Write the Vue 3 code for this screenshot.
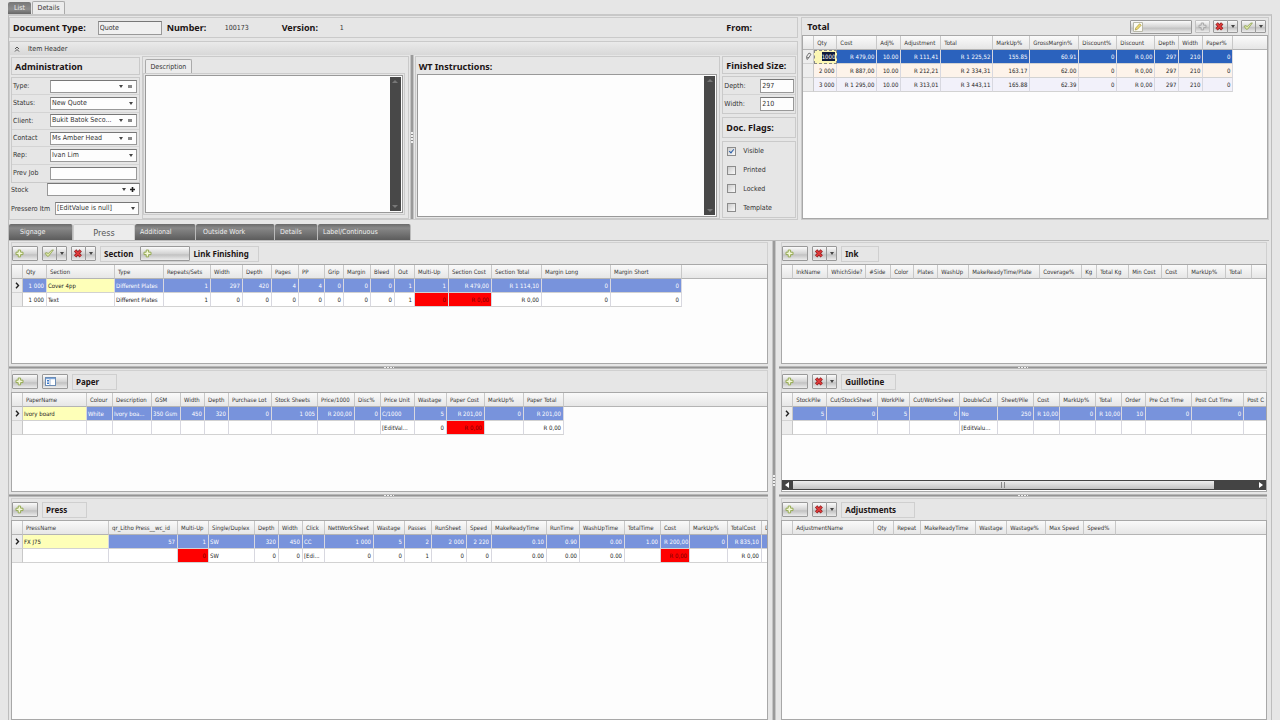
<script setup>
import { ref } from 'vue'

const col = (spec) =>
  spec.split(';').map((s) => {
    const [name, width, align] = s.split('|')
    return { name, width: Number(width), align: align || 'r' }
  })

const total = {
  cols: col('Qty|23;Cost|40;Adj%|24;Adjustment|40;Total|52;MarkUp%|37;GrossMargin%|49;Discount%|38;Discount|38;Depth|24;Width|24;Paper%|30'),
  rows: [
    ['1000', 'R 479,00', '10.00', 'R 111,41', 'R 1 225,52', '155.85', '60.91', '0', 'R 0,00', '297', '210', '0'],
    ['2 000', 'R 887,00', '10.00', 'R 212,21', 'R 2 334,31', '163.17', '62.00', '0', 'R 0,00', '297', '210', '0'],
    ['3 000', 'R 1 295,00', '10.00', 'R 313,01', 'R 3 443,11', '165.88', '62.39', '0', 'R 0,00', '297', '210', '0']
  ]
}

const leftPanels = [
  {
    title: 'Section', tools: ['add', 'check', 'delete'], link: true, size: 'short',
    cols: col('Qty|24;Section|68|l;Type|49|l;Repeats/Sets|47;Width|32;Depth|29;Pages|27;PP|26;Grip|19;Margin|27;Bleed|24;Out|20;Multi-Up|34;Section Cost|43;Section Total|50;Margin Long|69;Margin Short|71'),
    yellow: 1, red: [12, 13],
    rows: [
      ['1 000', 'Cover 4pp', 'Different Plates', '1', '297', '420', '4', '4', '0', '0', '0', '1', '1', 'R 479,00', 'R 1 114,10', '0', '0'],
      ['1 000', 'Text', 'Different Plates', '1', '0', '0', '0', '0', '0', '0', '0', '1', '0', 'R 0,00', 'R 0,00', '0', '0']
    ]
  },
  {
    title: 'Paper', tools: ['add', 'form'], size: 'mid',
    cols: col('PaperName|64|l;Colour|26|l;Description|39|l;GSM|29|l;Width|24;Depth|24;Purchase Lot|43;Stock Sheets|46;Price/1000|37;Disc%|26;Price Unit|34|l;Wastage|32;Paper Cost|38;MarkUp%|39;Paper Total|40'),
    yellow: 0, red: [12],
    rows: [
      ['Ivory board', 'White', 'Ivory boa...', '350 Gsm', '450', '320', '0', '1 005', 'R 200,00', '0', 'C/1000', '5', 'R 201,00', '0', 'R 201,00'],
      ['', '', '', '', '', '', '', '', '', '', '[EditVal...', '0', 'R 0,00', '', 'R 0,00']
    ]
  },
  {
    title: 'Press', tools: ['add'], size: 'mid',
    cols: col('PressName|86|l;qr_Litho Press__wc_id|69;Multi-Up|31;Single/Duplex|46|l;Depth|24;Width|24;Click|22|l;NettWorkSheet|49;Wastage|31;Passes|27;RunSheet|35;Speed|25;MakeReadyTime|55;RunTime|33;WashUpTime|45;TotalTime|36;Cost|29;MarkUp%|38;TotalCost|34;D|40'),
    yellow: 0, red: [2, 16],
    rows: [
      ['FX J75', '57', '1', 'SW', '320', '450', 'CC', '1 000', '5', '2', '2 000', '2 220', '0.10', '0.90', '0.00', '1.00', 'R 200,00', '0', 'R 835,10', ''],
      ['', '', '0', 'SW', '0', '0', '[Edi...', '0', '0', '1', '0', '0', '0.00', '0.00', '0.00', '', 'R 0,00', '', 'R 0,00', '']
    ]
  }
]

const rightPanels = [
  {
    title: 'Ink', tools: ['add', 'delete'], size: 'short',
    cols: col('InkName|35;WhichSide?|38;#Side|25;Color|23;Plates|24;WashUp|31;MakeReadyTime/Plate|71;Coverage%|42;Kg|15;Total Kg|32;Min Cost|33;Cost|26;MarkUp%|38;Total|26'),
    rows: []
  },
  {
    title: 'Guillotine', tools: ['add', 'delete'], size: 'large', scroll: true,
    cols: col('StockPile|34;Cut/StockSheet|51;WorkPile|32;Cut/WorkSheet|50;DoubleCut|38|l;Sheet/Pile|36;Cost|26;MarkUp%|36;Total|26;Order|24;Pre Cut Time|46;Post Cut Time|52;Post C|52'),
    rows: [
      ['5', '0', '5', '0', 'No', '250', 'R 10,00', '0', 'R 10,00', '10', '0', '0', ''],
      ['', '', '', '', '[EditValu...', '', '', '', '', '', '', '', '']
    ]
  },
  {
    title: 'Adjustments', tools: ['add', 'delete'], size: 'larger',
    cols: col('AdjustmentName|81;Qty|20;Repeat|27;MakeReadyTime|55;Wastage|31;Wastage%|39;Max Speed|38;Speed%|32'),
    rows: []
  }
]

const sides = [
  { id: 'left', panels: leftPanels },
  { id: 'right', panels: rightPanels }
]

const fields = [
  { id: 'type', label: 'Type:', value: '', extra: true },
  { id: 'status', label: 'Status:', value: 'New Quote' },
  { id: 'client', label: 'Client:', value: 'Bukit Batok Seco...', extra: true },
  { id: 'contact', label: 'Contact', value: 'Ms Amber Head', extra: true },
  { id: 'rep', label: 'Rep:', value: 'Ivan Lim' }
]

const flags = ref([
  { name: 'Visible', on: true },
  { name: 'Printed', on: false },
  { name: 'Locked', on: false },
  { name: 'Template', on: false }
])

const tabs = [
  { name: 'Signage', w: 64 },
  { name: 'Press', w: 62 },
  { name: 'Additional', w: 61 },
  { name: 'Outside Work', w: 79 },
  { name: 'Details', w: 43 },
  { name: 'Label/Continuous', w: 93 }
]

const tableWidth = (cols) => cols.reduce((a, c) => a + c.width, 11)
</script>

<template>
  <div class="page">
    <svg class="sprite" aria-hidden="true">
      <symbol id="i-add" viewBox="0 0 9 9">
        <path d="M3.2 1h2.4v2.2H8v2.4H5.600v2.300H3.200V5.600H1V3.200h2.200z" fill="#f4f8d8" stroke="#8da548" stroke-width=".9" />
      </symbol>
      <symbol id="i-plus" viewBox="0 0 9 9">
        <path d="M3.2 1h2.4v2.2H8v2.4H5.6v2.3H3.2V5.6H1V3.2h2.2z" fill="#dcdcdc" stroke="#a8a8a8" />
      </symbol>
      <symbol id="i-check" viewBox="0 0 10 9">
        <path d="M1 4.2l2.2-.6.8 1.2L7.6 1.2 9.4.9 4.6 7.2H3.2z" fill="#dfeaa8" stroke="#8c9f52" stroke-width=".8" />
      </symbol>
      <symbol id="i-delete" viewBox="0 0 9 9">
        <path d="M1.6 1.4l5.6 6M7.2 1.4l-5.6 6" stroke="#8a2022" stroke-width="3.2" />
        <path d="M1.8 1.6l5.2 5.6M7 1.6L1.8 7.2" stroke="#e03a3a" stroke-width="1.7" />
      </symbol>
      <symbol id="i-form" viewBox="0 0 11 9">
        <rect x=".5" y=".5" width="10" height="8" fill="#fff" stroke="#6c8cb4" />
        <path d="M1 1h9v1.200H1z" fill="#7fa8dc" />
        <path d="M2 3h2v1.500H2zM2 5.500h2V7H2z" fill="#3d78c8" />
        <path d="M5 2v6" stroke="#9db6d6" />
      </symbol>
      <symbol id="i-edit" viewBox="0 0 10 10">
        <path d="M.5.5h9v9h-9z" fill="#fbfbf4" stroke="#b8b8a8" />
        <path d="M2.2 8l.5-2L6.600 1.800l1.600 1.500L4.300 7.400z" fill="#f0dc70" stroke="#a39440" stroke-width=".7" />
      </symbol>
    </svg>

    <nav class="toptabs">
      <button class="dark">List</button>
      <button class="lit">Details</button>
    </nav>

    <main class="frame">
      <section class="upper">
        <div class="docside">
          <div class="docbar">
            <label for="doctype">Document Type:</label>
            <input id="doctype" class="box doc" value="Quote" />
            <b class="num">Number:</b><span class="numv">100173</span>
            <b class="ver">Version:</b><span>1</span>
            <b class="from">From:</b>
          </div>
          <div class="itembox">
            <button class="itemhead">
              <svg width="6" height="6" viewBox="0 0 6 6"><path d="M1 3l2-2 2 2M1 5.500l2-2 2 2" fill="none" stroke="#444" stroke-width=".9" /></svg>
              Item Header
            </button>
            <div class="itembody">
              <div class="admin">
                <h2 class="caption">Administration</h2>
                <div class="fields">
                  <div v-for="f in fields" :key="f.id" class="field">
                    <label :for="f.id">{{ f.label }}</label>
                    <div class="combo" :class="{ extra: f.extra }">
                      <select :id="f.id"><option>{{ f.value }}</option></select>
                      <i class="arrow"></i><i v-if="f.extra" class="dots"></i>
                    </div>
                  </div>
                  <div class="field">
                    <label for="prev">Prev Job</label>
                    <input id="prev" class="box" />
                  </div>
                </div>
                <div class="loose stock">
                  <label for="stock">Stock</label>
                  <div class="combo extra">
                    <select id="stock"><option></option></select>
                    <i class="arrow"></i>
                    <svg class="cross" width="5" height="5" viewBox="0 0 5 5"><path d="M2.500 0v5M0 2.500h5" stroke="#222" stroke-width="1.600" /></svg>
                  </div>
                </div>
                <div class="loose item">
                  <label for="pressero">Pressero Itm</label>
                  <div class="combo">
                    <select id="pressero"><option>[EditValue is null]</option></select>
                    <i class="arrow"></i>
                  </div>
                </div>
              </div>

              <div class="desc">
                <button class="desctab">Description</button>
                <div class="memo framed">
                  <textarea aria-label="Description"></textarea>
                  <div class="vbar"><i></i><i></i></div>
                </div>
              </div>

              <div class="vsplit"><i></i></div>

              <div class="wt">
                <label for="wt">WT Instructions:</label>
                <div class="memo">
                  <textarea id="wt"></textarea>
                  <div class="vbar"><i></i><i></i></div>
                </div>
              </div>

              <div class="sizes">
                <h2 class="caption">Finished Size:</h2>
                <div class="group dims">
                  <div><label for="depth">Depth:</label><input id="depth" class="box" value="297" /></div>
                  <div><label for="width">Width:</label><input id="width" class="box" value="210" /></div>
                </div>
                <h2 class="caption tall">Doc. Flags:</h2>
                <div class="group flags">
                  <label v-for="f in flags" :key="f.name"><input v-model="f.on" type="checkbox" />{{ f.name }}</label>
                </div>
              </div>
            </div>
          </div>
        </div>

        <div class="totals">
          <div class="totalhead">
            <h2>Total</h2>
            <button class="btn wide" aria-label="Edit"><svg width="10" height="10"><use href="#i-edit" /></svg></button>
            <button class="btn tiny" aria-label="Add"><svg width="9" height="9"><use href="#i-plus" /></svg></button>
            <span class="split">
              <button class="btn" aria-label="Delete"><svg width="9" height="9"><use href="#i-delete" /></svg></button>
              <button class="btn drop" aria-label="Delete options"><i class="arrow"></i></button>
            </span>
            <span class="split">
              <button class="btn" aria-label="Accept"><svg width="10" height="9"><use href="#i-check" /></svg></button>
              <button class="btn drop" aria-label="Accept options"><i class="arrow"></i></button>
            </span>
          </div>
          <div class="gridbox">
            <div class="headfill"></div>
            <table class="total" :style="{ width: tableWidth(total.cols) + 'px' }">
              <colgroup><col style="width: 11px" /><col v-for="c in total.cols" :key="c.name" :style="{ width: c.width + 'px' }" /></colgroup>
              <thead><tr><th></th><th v-for="c in total.cols" :key="c.name">{{ c.name }}</th></tr></thead>
              <tbody>
                <tr v-for="(r, ri) in total.rows" :key="ri" :class="['t' + ri]">
                  <td class="ind">
                    <svg v-if="ri === 0" width="7" height="9" viewBox="0 0 7 9"><path d="M2 7.500L1.500 4.500 4 1l2 1.200-2.500 4zM2 5l2 1" fill="#eee" stroke="#555" stroke-width=".8" /></svg>
                  </td>
                  <td v-for="(v, ci) in r" :key="ci" :class="{ editing: ri === 0 && ci === 0 }">
                    <span>{{ v }}</span>
                  </td>
                </tr>
              </tbody>
            </table>
          </div>
        </div>
      </section>

      <nav class="tabs">
        <button v-for="t in tabs" :key="t.name" :class="{ active: t.name === 'Press' }" :style="{ width: t.w + 'px' }">{{ t.name }}</button>
      </nav>

      <section class="lower">
        <template v-for="(s, si) in sides" :key="s.id">
          <div v-if="si" class="vsplit big"><i></i></div>
          <div class="side">
            <div v-for="p in s.panels" :key="p.title" class="panel">
              <div class="toolbar">
                <template v-for="t in p.tools" :key="t">
                  <button v-if="t === 'add'" class="btn add" aria-label="Add"><svg width="9" height="9"><use href="#i-add" /></svg></button>
                  <button v-else-if="t === 'form'" class="btn add" aria-label="Form"><svg width="11" height="9"><use href="#i-form" /></svg></button>
                  <span v-else class="split">
                    <button class="btn" :aria-label="t"><svg width="10" height="9"><use :href="'#i-' + t" /></svg></button>
                    <button class="btn drop" :aria-label="t + ' options'"><i class="arrow"></i></button>
                  </span>
                </template>
                <div class="titlebox" :class="[p.size, { linked: p.link }]">
                  <h2>{{ p.title }}</h2>
                  <template v-if="p.link">
                    <button class="btn link" aria-label="Add link"><svg width="9" height="9"><use href="#i-add" /></svg></button>
                    <h2>Link Finishing</h2>
                  </template>
                </div>
              </div>
              <div class="gridbox">
                <div class="headfill"></div>
                <table :style="{ width: tableWidth(p.cols) + 'px' }">
                  <colgroup><col style="width: 11px" /><col v-for="c in p.cols" :key="c.name" :style="{ width: c.width + 'px' }" /></colgroup>
                  <thead><tr><th></th><th v-for="c in p.cols" :key="c.name">{{ c.name }}</th></tr></thead>
                  <tbody>
                    <tr v-for="(r, ri) in p.rows" :key="ri" :class="{ sel: ri === 0 }">
                      <td class="ind">
                        <svg v-if="ri === 0" width="5" height="7" viewBox="0 0 5 7"><path d="M1 .800l2.500 2.700L1 6.200" fill="none" stroke="#222" stroke-width="1.400" /></svg>
                      </td>
                      <td
                        v-for="(v, ci) in r"
                        :key="ci"
                        :class="{ l: p.cols[ci].align === 'l', yellow: ri === 0 && ci === p.yellow, red: ri === 1 && p.red && p.red.includes(ci) }"
                      >{{ v }}</td>
                    </tr>
                  </tbody>
                </table>
                <div v-if="p.scroll" class="hbar"><i class="la"></i><div class="thumb"><i></i></div><i class="ra"></i></div>
              </div>
              <div class="hsplit"><i></i></div>
            </div>
          </div>
        </template>
      </section>
    </main>
  </div>
</template>

<style>
html, body { margin: 0; background: #e6e6e6; }
</style>

<style scoped>
* { box-sizing: border-box; }
.page {
  height: 100vh; display: flex; flex-direction: column; overflow: hidden;
  padding: 0 8px 0 8px; background: #e6e6e6; color: #333;
  font: 7px/10px "DejaVu Sans Condensed", "DejaVu Sans", "Noto Sans", sans-serif;
}
.sprite { position: absolute; width: 0; height: 0; }
button, input, select, textarea { font: inherit; color: inherit; margin: 0; padding: 0; border: 0; border-radius: 0; outline: none; }
h2, b, .docbar > label, .wt > label { margin: 0; font: bold 9px/12px "Noto Sans", "Open Sans", sans-serif; color: #201414; white-space: nowrap; }

.toptabs { display: flex; height: 14px; padding-top: 1px; flex: none; }
.toptabs .dark { width: 23px; margin-top: 1px; background: linear-gradient(#777, #8c8c8c 60%, #666); color: #eee; border-radius: 2px 2px 0 0; }
.toptabs .lit { width: 33px; margin-left: 1px; background: #ececec; border: 1px solid #aaa; border-bottom: 0; border-radius: 2px 2px 0 0; }
.frame { flex: 1; min-height: 0; display: flex; flex-direction: column; border: 1px solid #bdbdbd; border-top: 2px solid #c8c8c8; border-bottom: 0; padding-right: 2px; }

.upper { display: grid; grid-template-columns: 790fr 468fr; column-gap: 3px; height: 204px; padding-top: 1px; flex: none; }
.docside { display: flex; flex-direction: column; gap: 3px; min-width: 0; }
.docbar { display: flex; align-items: center; height: 21px; border: 1px solid #cacaca; padding: 0 4px 0 3px; font-size: 7px; }
.docbar .doc { width: 64px; height: 14px; margin-left: 12px; background: #f0f0f0; }
.num { margin-left: 5px; width: 58px; }
.numv { width: 57px; }
.ver { width: 58px; }
.from { margin-left: auto; width: 67px; }
.box { border: 1px solid #999; border-top-color: #777; background: #fdfdfd; padding: 0 1px; min-width: 0; }
.itembox { flex: 1; border: 1px solid #cacaca; display: flex; flex-direction: column; min-height: 0; }
.itemhead { height: 13px; flex: none; display: flex; align-items: center; gap: 8px; padding: 0 4px; background: linear-gradient(#eaeaea, #d8d8d8); text-align: left; }
.itembody { flex: 1; min-height: 0; display: grid; grid-template-columns: 131fr 267fr 4px 306fr 76px; gap: 0 1px; }
.caption { border: 1px solid #cacaca; padding: 0 3px; height: 18px; line-height: 17px; }
.admin { padding: 2px 1px 0 1px; display: flex; flex-direction: column; }
.fields { margin-top: 2px; border: 1px solid #cacaca; display: grid; grid-auto-rows: 1fr; height: 106px; }
.field { display: grid; grid-template-columns: 38px 1fr; align-items: center; border-bottom: 1px solid #d4d4d4; padding-right: 2px; }
.field:last-child { border-bottom: 0; }
.field > .box { height: 13px; }
.field label { padding-left: 1px; }
.combo { position: relative; display: flex; min-width: 0; height: 13px; border: 1px solid #999; border-top-color: #777; background: #fdfdfd; }
.combo select { appearance: none; flex: 1; min-width: 0; background: none; padding: 0 1px; height: 11px; line-height: 11px; }
.arrow { display: block; width: 0; height: 0; border: 2px solid transparent; border-top: 3px solid #444; border-bottom: 0; }
.combo .arrow { align-self: center; margin: 0 3px; }
.dots { align-self: center; width: 4px; height: 3px; background: #888; margin: 0 4px 0 2px; }
.cross { align-self: center; margin: 0 4px 0 1px; }
.loose { display: grid; align-items: center; white-space: nowrap; }
.stock { grid-template-columns: 36px 1fr; }
.item { grid-template-columns: 44px 1fr; margin-top: 6px; padding-right: 1px; }

.desc { padding: 2px 2px 3px; border: 1px solid #cacaca; display: flex; flex-direction: column; margin-top: 1px; min-width: 0; }
.desctab { align-self: flex-start; width: 47px; height: 14px; flex: none; border: 1px solid #aaa; border-bottom: 0; background: #ececec; border-radius: 2px 2px 0 0; }
.memo { flex: 1; min-height: 0; display: flex; border: 1px solid #999; background: #fdfdfd; }
.framed { outline: 1px solid #ccc; outline-offset: 1px; margin: 2px 3px 2px 0; }
.memo textarea { flex: 1; min-width: 0; resize: none; background: none; }
.vbar { width: 11px; background: #484848; display: flex; flex-direction: column; justify-content: space-between; align-items: center; padding: 3px 0; margin: 1px; }
.vbar i { border: 3px solid transparent; border-bottom-color: #777; border-top: 0; }
.vbar i:last-child { border: 3px solid transparent; border-top-color: #777; border-bottom: 0; }
.vsplit { display: flex; align-items: center; justify-content: center; background: #9a9a9a; border: 1px solid #c4c4c4; border-width: 0 1px; }
.vsplit i { width: 2px; height: 11px; background: repeating-linear-gradient(#eee 0 2px, #888 2px 3px); }
.wt { display: flex; flex-direction: column; padding: 2px 2px 1px 1px; border: 1px solid #cacaca; margin-top: 1px; min-width: 0; }
.wt > label { height: 15px; padding-left: 2px; line-height: 15px; }
.sizes { padding: 1px 1px 1px 1px; display: flex; flex-direction: column; }
.sizes .tall { height: 21px; line-height: 20px; margin-top: 3px; }
.group { border: 1px solid #cacaca; }
.dims { margin-top: 2px; }
.dims div { display: grid; grid-template-columns: 1fr 34px; align-items: center; height: 18px; padding: 0 1px; border-bottom: 1px solid #d4d4d4; }
.dims div:last-child { border-bottom: 0; }
.dims .box { height: 14px; }
.flags { margin-top: 3px; flex: 1; display: flex; flex-direction: column; justify-content: space-around; padding-left: 4px; }
.flags label { display: flex; align-items: center; gap: 7px; }
.flags input { appearance: none; position: relative; width: 9px; height: 9px; border: 1px solid #8c8c8c; background: linear-gradient(135deg, #ccc, #fafafa); }
.flags input:checked::before { content: ""; position: absolute; left: 2px; top: 0; width: 2px; height: 4px; border: solid #2b5fa8; border-width: 0 1px 1px 0; transform: rotate(40deg); }

.totals { display: flex; flex-direction: column; border: 1px solid #cacaca; min-width: 0; }
.totalhead { display: flex; align-items: center; height: 17px; flex: none; padding: 0 2px 0 5px; gap: 3px; }
.totalhead h2 { margin-right: auto; }
.btn { display: flex; align-items: center; flex: none; padding: 0 2px; height: 15px; border: 1px solid #999; border-radius: 1px; background: linear-gradient(#fafafa, #d4d4d4 50%, #c2c2c2 60%, #ececec); }
.btn.wide { width: 62px; height: 14px; }
.btn.tiny { width: 15px; height: 13px; border-color: #c2c2c2; }
.totalhead .split .btn { height: 13px; }
.split { display: flex; }
.split .btn { width: 15px; padding: 0 1px; }
.split .drop { width: 11px; margin-left: -1px; padding: 0; justify-content: center; }

.gridbox { position: relative; flex: 1; min-height: 0; overflow: hidden; border: 1px solid #a8a8a8; background: #fdfdfd; }
.headfill { position: absolute; inset: 0 0 auto; height: 14px; background: linear-gradient(#fafafa, #e6e6e6); border-bottom: 1px solid #b4b4b4; }
table { position: relative; table-layout: fixed; border-collapse: separate; border-spacing: 0; }
th, td { height: 14px; padding: 0 2px 0 3px; overflow: hidden; white-space: nowrap; font-weight: normal; font-size: 6px; line-height: 12px; border-right: 1px solid #c8c8c8; }
th { text-align: left; border-bottom: 1px solid #b4b4b4; padding-right: 0; }
td { text-align: right; border-bottom: 1px solid #d2d2d2; border-right-color: #d8d8e0; color: #222; background: #fff; }
td.l { text-align: left; padding-left: 1px; }
td.ind { padding: 0; text-align: center; background: #ededed; border-right-color: #c8c8c8; }
td.ind svg { display: block; margin: auto; }
.sel td:not(.ind) { background: #7893dc; color: #fff; }
.sel td.yellow:not(.ind) { background: #feffb8; color: #222; }
td.red { background: #f00; color: #700; }
.t0 td:not(.ind) { background: #2b62bd; color: #fff; }
.t1 td:not(.ind) { background: #fdf3ea; }
.t2 td:not(.ind) { background: #f2f1fa; }
.t0 td.editing:not(.ind) { background: #fbf6b4; padding-right: 1px; border: 1px dashed #888; }
.editing span { display: inline-block; background: #101c3c; height: 9px; line-height: 9px; }

.tabs { display: flex; flex: none; height: 21px; padding-top: 4px; border-bottom: 1px solid #bbb; }
.tabs button { text-align: left; padding-left: 11px; color: #eee; background: linear-gradient(#6a6a6a, #888 25%, #5c5c5c); border-right: 1px solid #bbb; border-radius: 2px 2px 0 0; }
.tabs button:nth-child(n + 3) { padding-left: 5px; }
.tabs button:nth-child(4) { padding-left: 7px; }
.tabs .active { background: #ececec; color: #555; text-align: center; padding: 0; font-size: 9px; border: 1px solid #ccc; border-bottom: 0; }

.lower { flex: 1; min-height: 0; display: grid; grid-template-columns: 760fr 5px 489fr; column-gap: 2px; }
.vsplit.big { margin-right: 1px; }
.side { display: grid; grid-template-rows: 128px 128px 1fr; min-width: 0; min-height: 0; }
.panel { display: flex; flex-direction: column; min-width: 0; min-height: 0; padding: 1px 2px 0 2px; }
.toolbar { display: flex; align-items: center; flex: none; height: 22px; gap: 4px; border: 1px solid #d0d0d0; border-bottom: 0; }
.add { width: 26px; }
.titlebox { display: flex; align-items: center; height: 16px; border: 1px solid #cfcfcf; padding-left: 3px; }
.titlebox h2 { font-size: 8px; }
.short { width: 38px; }
.mid { width: 45px; }
.large { width: 55px; }
.larger { width: 74px; }
.linked { width: 159px; gap: 3px; }
.linked .link { width: 50px; margin-left: 4px; }
.hsplit { flex: none; height: 3px; margin: 2px 0 0 -2px; background: #949494; border: 1px solid #b8b8b8; border-width: 1px 0; display: flex; justify-content: center; }
.hsplit i { width: 10px; background: repeating-linear-gradient(90deg, #eee 0 2px, #888 2px 3px); }
.panel:last-child .hsplit { display: none; }
.hbar { position: absolute; left: 0; right: 0; bottom: 1px; height: 10px; background: #444; display: flex; align-items: center; padding: 0 3px; }
.hbar .la { border: 3px solid transparent; border-right: 4px solid #fff; border-left: 0; }
.hbar .ra { margin-left: auto; border: 3px solid transparent; border-left: 4px solid #fff; border-right: 0; }
.thumb { width: 88%; height: 8px; margin-left: 4px; background: linear-gradient(#eee, #c2c2c2); display: flex; justify-content: center; align-items: center; }
.thumb i { width: 4px; height: 6px; border: 1px solid #888; border-width: 0 1px; }
</style>
